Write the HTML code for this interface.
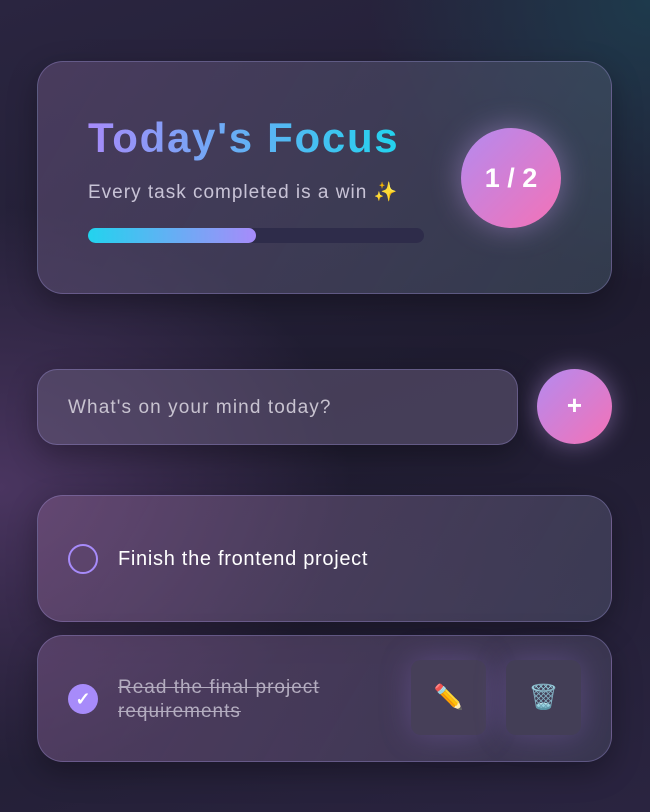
<!DOCTYPE html>
<html><head><style>
*{box-sizing:border-box;margin:0;padding:0}
body{width:650px;height:812px;overflow:hidden;font-family:"Liberation Sans",sans-serif;
background:radial-gradient(ellipse 500px 400px at 0% 60%,#4a3560 0%,transparent 70%),radial-gradient(ellipse 400px 400px at 100% 0%,#1e3a4c 0%,transparent 70%),linear-gradient(160deg,#2a2540 0%,#1f1c30 50%,#2a2440 100%);position:relative}
.card{position:absolute;border:1px solid rgba(160,150,220,0.35);border-radius:26px;background:linear-gradient(120deg,rgba(110,85,130,0.55),rgba(80,90,110,0.4));box-shadow:0 10px 30px rgba(0,0,0,0.3)}
.h1{position:absolute;left:88px;top:114px;font-size:42px;font-weight:bold;background:linear-gradient(90deg,#a78bfa,#22d3ee);-webkit-background-clip:text;color:transparent;letter-spacing:1.7px}
</style></head><body>
<div class="card" style="left:37px;top:61px;width:575px;height:233px;background:linear-gradient(120deg,rgba(95,75,115,0.6),rgba(70,90,105,0.5))"></div>
<div class="h1">Today's Focus</div>
<div style="position:absolute;left:88px;top:180px;font-size:19px;color:#c8c3d6;letter-spacing:1px">Every task completed is a win ✨</div>
<div style="position:absolute;left:88px;top:228px;width:336px;height:15px;border-radius:8px;background:#2e2c4a"></div>
<div style="position:absolute;left:88px;top:228px;width:168px;height:15px;border-radius:8px;background:linear-gradient(90deg,#22d3ee,#a78bfa)"></div>
<div style="position:absolute;left:461px;top:128px;width:100px;height:100px;border-radius:50%;background:linear-gradient(135deg,#b48af0,#f472b6);box-shadow:0 0 30px rgba(200,160,240,0.45);color:#fff;font-weight:bold;font-size:27px;text-align:center;line-height:100px">1 / 2</div>

<div class="card" style="left:37px;top:369px;width:481px;height:76px;border-radius:20px;background:rgba(100,90,120,0.55)"></div>
<div style="position:absolute;left:68px;top:397px;font-size:19px;color:#c8c3d0;letter-spacing:1.1px">What's on your mind today?</div>
<div style="position:absolute;left:537px;top:369px;width:75px;height:75px;border-radius:50%;background:linear-gradient(135deg,#b48af0,#f472b6);box-shadow:0 0 25px rgba(200,160,240,0.45);color:#fff;font-weight:bold;font-size:26px;text-align:center;line-height:73px">+</div>

<div class="card" style="left:37px;top:495px;width:575px;height:127px;background:linear-gradient(120deg,rgba(120,85,130,0.6),rgba(80,85,110,0.5))"></div>
<div style="position:absolute;left:68px;top:544px;width:30px;height:30px;border-radius:50%;border:2px solid #a78bfa"></div>
<div style="position:absolute;left:118px;top:548px;font-size:20px;color:#fff;letter-spacing:0.7px">Finish the frontend project</div>

<div class="card" style="left:37px;top:635px;width:575px;height:127px;background:linear-gradient(120deg,rgba(110,80,125,0.6),rgba(75,75,100,0.5))"></div>
<div style="position:absolute;left:68px;top:684px;width:30px;height:30px;border-radius:50%;background:#a78bfa;color:#fff;text-align:center;line-height:30px;font-size:18px;font-weight:bold">✓</div>
<div style="position:absolute;left:118px;top:676px;font-size:19px;line-height:24px;color:#b3acbf;text-decoration:line-through;letter-spacing:1px">Read the final project<br>requirements</div>
<div style="position:absolute;left:411px;top:660px;width:75px;height:75px;border-radius:10px;background:#463f58;box-shadow:0 0 30px rgba(140,110,200,0.35);text-align:center;line-height:75px;font-size:24px">✏️</div>
<div style="position:absolute;left:506px;top:660px;width:75px;height:75px;border-radius:10px;background:#433e56;box-shadow:0 0 30px rgba(140,110,200,0.35);text-align:center;line-height:75px;font-size:24px">🗑️</div>
</body></html>
